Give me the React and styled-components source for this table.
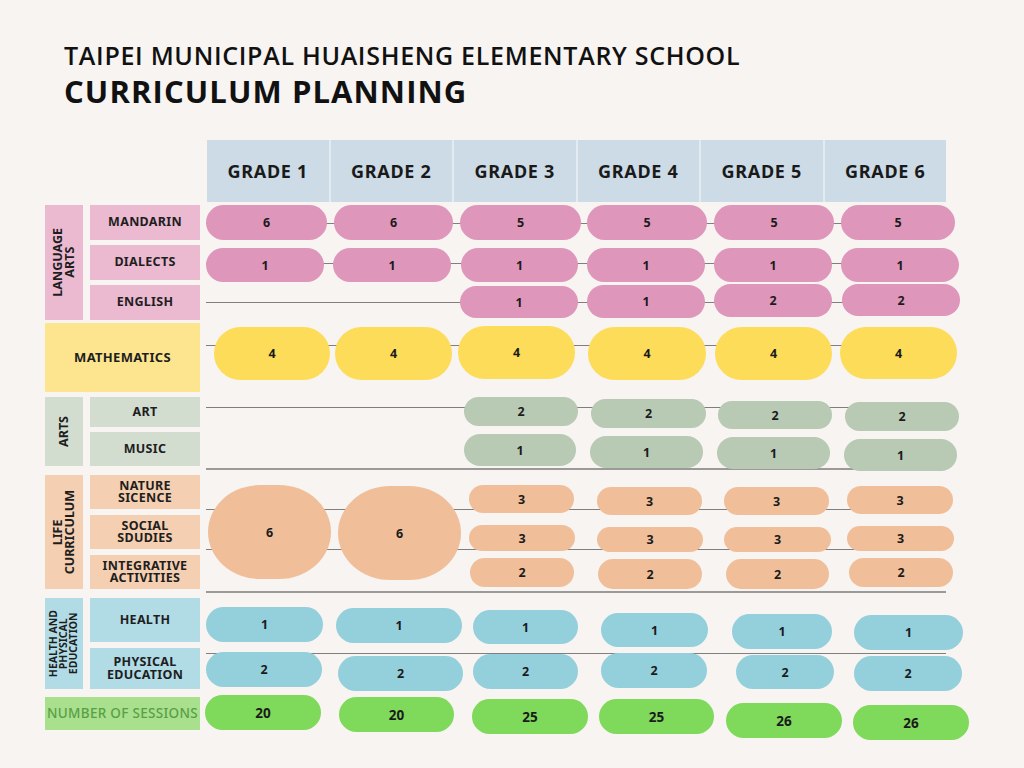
import React from 'react';
import styled, { createGlobalStyle } from 'styled-components';

const GlobalStyle = createGlobalStyle`
  html, body {
    margin: 0;
    padding: 0;
    background: #f7f4f1;
  }
  body {
    font-family: 'Noto Sans', 'Open Sans', sans-serif;
    color: #1c1c1c;
  }
`;

const PALETTE = {
  pink: { pill: '#df96bb', label: '#ebb9d0' },
  yellow: { pill: '#fddc59', label: '#fde58f' },
  sage: { pill: '#b8c9b4', label: '#d2dccf' },
  peach: { pill: '#f0bf99', label: '#f5cfb1' },
  blue: { pill: '#94cfdc', label: '#b1dce6' },
  green: { pill: '#7fd95a', label: '#a8e08d' },
};

const FIRST_COL = 207;
const PITCH = 126;

const Page = styled.div`
  width: 1024px;
  min-height: 768px;
  padding-top: 41px;
  box-sizing: border-box;
`;

const TitleBlock = styled.header`
  margin-left: 64px;
  font-family: 'Open Sans', 'Noto Sans', sans-serif;
  color: #111;
`;

const SchoolName = styled.h2`
  margin: 0;
  font-size: 25px;
  line-height: 29px;
  font-weight: 600;
  letter-spacing: 0.7px;
`;

const Heading = styled.h1`
  margin: 4px 0 0;
  font-size: 31px;
  line-height: 34px;
  font-weight: 700;
  letter-spacing: 1.1px;
`;

const Table = styled.div`
  margin-left: 45px;
  margin-top: 32px;
  display: flex;
  flex-direction: column;
`;

const Section = styled.div`
  display: grid;
  grid-template-columns: 38px 110px repeat(6, 119px);
  grid-template-rows: ${({ $rows }) => $rows.map((r) => `${r}px`).join(' ')};
  column-gap: 7px;
  row-gap: ${({ $gap }) => $gap}px;
  margin-top: ${({ $mt }) => $mt}px;
`;

const GradeBar = styled.div`
  grid-column: 3 / -1;
  width: 739px;
  display: flex;
  background: #cddbe6;
`;

const GradeCell = styled.div`
  flex: 1;
  display: flex;
  align-items: center;
  justify-content: center;
  font-size: 18px;
  font-weight: 700;
  letter-spacing: 0.7px;
  color: #1a1a1a;
  & + & {
    border-left: 2px solid #e3eaf0;
  }
`;

const GroupLabel = styled.div`
  grid-column: 1;
  grid-row: 1 / -1;
  background: ${({ $bg }) => $bg};
  display: flex;
  align-items: center;
  justify-content: center;
  overflow: hidden;
`;

const VerticalText = styled.span`
  writing-mode: vertical-rl;
  transform: rotate(180deg);
  text-align: center;
  font-size: ${({ $size }) => $size}px;
  line-height: ${({ $size }) => $size * 0.95}px;
  font-weight: 700;
  color: #1e1e1e;
  white-space: nowrap;
`;

const SubLabel = styled.div`
  grid-column: ${({ $wide }) => ($wide ? '1 / 3' : '2')};
  grid-row: ${({ $row }) => $row + 1};
  background: ${({ $bg }) => $bg};
  color: ${({ $color }) => $color || '#1e1e1e'};
  display: flex;
  align-items: center;
  justify-content: center;
  text-align: center;
  font-size: ${({ $size }) => $size || 12.5}px;
  line-height: 12.5px;
  letter-spacing: 0.3px;
  font-weight: ${({ $weight }) => $weight || 700};
  white-space: pre-line;
`;

const Rule = styled.div`
  grid-column: 3 / -1;
  grid-row: ${({ $row }) => $row + 1};
  align-self: start;
  justify-self: start;
  margin-top: ${({ $offset }) => $offset}px;
  margin-left: -1px;
  width: 740px;
  height: ${({ $thick }) => ($thick ? 2 : 1)}px;
  background: ${({ $thick }) => ($thick ? '#9c9a98' : '#7f7f7f')};
`;

const Pill = styled.div`
  grid-column: ${({ $col }) => $col + 3};
  grid-row: ${({ $row, $span }) => `${$row + 1} / span ${$span}`};
  align-self: start;
  justify-self: start;
  margin-left: ${({ $dx }) => $dx}px;
  margin-top: ${({ $dy }) => $dy}px;
  width: ${({ $w }) => $w}px;
  height: ${({ $h }) => $h}px;
  border-radius: ${({ $round }) => ($round ? '52px / 47px' : '999px')};
  background: ${({ $bg }) => $bg};
  display: flex;
  align-items: center;
  justify-content: center;
  font-size: ${({ $big }) => ($big ? 13.5 : 12.5)}px;
  font-weight: 700;
  color: #1b1b1b;
`;

// pills: [col, x, y, w, h, value, rowSpan] in page coordinates
const SECTIONS = [
  {
    key: 'language',
    tone: 'pink',
    top: 205,
    mt: 3,
    rows: [35, 35, 35],
    gap: 5,
    group: { text: 'LANGUAGE\nARTS', size: 12.5 },
    subs: ['MANDARIN', 'DIALECTS', 'ENGLISH'],
    rules: [[0, 223], [1, 263], [2, 302]],
    pills: [
      [0, [[0, 206, 205, 121, 35, '6'], [1, 334, 205, 119, 35, '6'], [2, 460, 205, 121, 35, '5'], [3, 587, 205, 120, 35, '5'], [4, 714, 205, 120, 35, '5'], [5, 841, 205, 114, 35, '5']]],
      [1, [[0, 206, 248, 118, 34, '1'], [1, 333, 248, 118, 34, '1'], [2, 461, 248, 117, 34, '1'], [3, 587, 248, 118, 34, '1'], [4, 714, 248, 118, 34, '1'], [5, 841, 248, 118, 34, '1']]],
      [2, [[2, 460, 286, 118, 32, '1'], [3, 587, 285, 118, 33, '1'], [4, 714, 284, 118, 33, '2'], [5, 842, 284, 118, 32, '2']]],
    ],
  },
  {
    key: 'math',
    tone: 'yellow',
    top: 323,
    mt: 3,
    rows: [69],
    gap: 0,
    wide: 'MATHEMATICS',
    rules: [[0, 345]],
    pills: [
      [0, [[0, 214, 327, 116, 53, '4'], [1, 335, 327, 117, 53, '4'], [2, 458, 326, 117, 53, '4'], [3, 588, 327, 118, 53, '4'], [4, 715, 327, 117, 53, '4'], [5, 840, 327, 117, 52, '4']]],
    ],
  },
  {
    key: 'arts',
    tone: 'sage',
    top: 397,
    mt: 5,
    rows: [30, 34],
    gap: 5,
    group: { text: 'ARTS', size: 12.5 },
    subs: ['ART', 'MUSIC'],
    rules: [[0, 407], [1, 468, true]],
    pills: [
      [0, [[2, 464, 397, 114, 29, '2'], [3, 591, 399, 115, 29, '2'], [4, 718, 401, 114, 28, '2'], [5, 845, 402, 114, 29, '2']]],
      [1, [[2, 464, 434, 112, 32, '1'], [3, 590, 436, 113, 32, '1'], [4, 717, 437, 113, 32, '1'], [5, 844, 439, 113, 32, '1']]],
    ],
  },
  {
    key: 'life',
    tone: 'peach',
    top: 475,
    mt: 9,
    rows: [34, 34, 34],
    gap: 6,
    group: { text: 'LIFE\nCURRICULUM', size: 12.5 },
    subs: ['NATURE\nSICENCE', 'SOCIAL\nSDUDIES', 'INTEGRATIVE\nACTIVITIES'],
    rules: [[0, 509], [1, 549], [2, 591, true]],
    pills: [
      [0, [[0, 208, 485, 123, 94, '6', 3], [1, 338, 486, 123, 94, '6', 3], [2, 469, 485, 105, 28, '3'], [3, 597, 487, 105, 28, '3'], [4, 724, 487, 105, 28, '3'], [5, 847, 486, 106, 28, '3']]],
      [1, [[2, 469, 525, 106, 26, '3'], [3, 597, 527, 106, 25, '3'], [4, 724, 527, 107, 25, '3'], [5, 847, 526, 107, 25, '3']]],
      [2, [[2, 470, 558, 104, 29, '2'], [3, 598, 559, 104, 30, '2'], [4, 726, 559, 103, 30, '2'], [5, 849, 558, 104, 29, '2']]],
    ],
  },
  {
    key: 'health',
    tone: 'blue',
    top: 598,
    mt: 9,
    rows: [44, 41],
    gap: 6,
    group: { text: 'HEALTH AND\nPHYSICAL\nEDUCATION', size: 10.5 },
    subs: ['HEALTH', 'PHYSICAL\nEDUCATION'],
    rules: [[1, 653]],
    pills: [
      [0, [[0, 206, 607, 117, 35, '1'], [1, 336, 608, 126, 35, '1'], [2, 473, 610, 105, 34, '1'], [3, 601, 613, 107, 34, '1'], [4, 732, 614, 100, 35, '1'], [5, 854, 615, 109, 35, '1']]],
      [1, [[0, 206, 652, 116, 35, '2'], [1, 338, 656, 125, 35, '2'], [2, 473, 654, 105, 35, '2'], [3, 601, 653, 106, 35, '2'], [4, 736, 655, 98, 34, '2'], [5, 854, 656, 108, 35, '2']]],
    ],
  },
  {
    key: 'sessions',
    tone: 'green',
    top: 697,
    mt: 8,
    rows: [33],
    gap: 0,
    wide: 'NUMBER OF SESSIONS',
    wideColor: '#5a9f45',
    wideSize: 13.5,
    wideWeight: 500,
    big: true,
    rules: [],
    pills: [
      [0, [[0, 205, 695, 116, 35, '20'], [1, 339, 697, 115, 35, '20'], [2, 472, 699, 116, 35, '25'], [3, 599, 699, 115, 35, '25'], [4, 726, 703, 116, 35, '26'], [5, 853, 705, 116, 35, '26']]],
    ],
  },
];

const rowTops = (s) => s.rows.map((_, i) => s.top + s.rows.slice(0, i).reduce((a, b) => a + b, 0) + s.gap * i);

const SubjectSection = ({ section }) => {
  const tone = PALETTE[section.tone];
  const tops = rowTops(section);

  return (
    <Section $rows={section.rows} $gap={section.gap} $mt={section.mt}>
      {section.group && (
        <GroupLabel $bg={tone.label}>
          <VerticalText $size={section.group.size}>
            {section.group.text.split('\n').map((line, i) => (
              <React.Fragment key={i}>
                {i > 0 && <br />}
                {line}
              </React.Fragment>
            ))}
          </VerticalText>
        </GroupLabel>
      )}

      {section.subs &&
        section.subs.map((sub, i) => (
          <SubLabel key={sub} $row={i} $bg={tone.label}>
            {sub}
          </SubLabel>
        ))}

      {section.wide && (
        <SubLabel
          $wide
          $row={0}
          $bg={tone.label}
          $color={section.wideColor}
          $size={section.wideSize || 13}
          $weight={section.wideWeight}
        >
          {section.wide}
        </SubLabel>
      )}

      {section.rules.map(([row, y, thick]) => (
        <Rule key={`${row}-${y}`} $row={row} $offset={y - tops[row]} $thick={thick} />
      ))}

      {section.pills.map(([row, list]) =>
        list.map(([col, x, y, w, h, value, span]) => (
          <Pill
            key={`${row}-${col}`}
            $row={row}
            $col={col}
            $span={span || 1}
            $round={span > 1}
            $dx={x - (FIRST_COL + PITCH * col)}
            $dy={y - tops[row]}
            $w={w}
            $h={h}
            $bg={tone.pill}
            $big={section.big}
          >
            {value}
          </Pill>
        ))
      )}
    </Section>
  );
};

const App = () => {
  const grades = [1, 2, 3, 4, 5, 6];

  return (
    <Page>
      <GlobalStyle />
      <TitleBlock>
        <SchoolName>TAIPEI MUNICIPAL HUAISHENG ELEMENTARY SCHOOL</SchoolName>
        <Heading>CURRICULUM PLANNING</Heading>
      </TitleBlock>

      <Table>
        <Section $rows={[62]} $gap={0} $mt={0}>
          <GradeBar>
            {grades.map((g) => (
              <GradeCell key={g}>GRADE {g}</GradeCell>
            ))}
          </GradeBar>
        </Section>

        {SECTIONS.map((s) => (
          <SubjectSection key={s.key} section={s} />
        ))}
      </Table>
    </Page>
  );
};

export default App;
